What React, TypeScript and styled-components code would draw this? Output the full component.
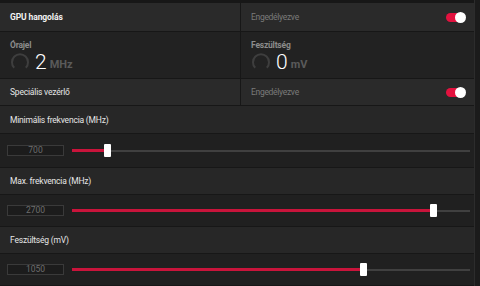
import React from 'react'
import styled, { createGlobalStyle } from 'styled-components'

const Global = createGlobalStyle`
  html, body { margin: 0; padding: 0; background: #151515; }
  body { font-family: Roboto, "Open Sans", sans-serif; }
`

const Page = styled.div`
  display: flex;
  width: 480px;
  height: 286px;
  overflow: hidden;
  background: #151515;
`

const Main = styled.div`
  flex: 1;
  display: flex;
  flex-direction: column;
  gap: 1px;
  padding-top: 3px;
  background: #171717;
  border-right: 1px solid #2c2c2c;
`

const Scroll = styled.div`
  width: 5px;
  background: #1b1b1b;
`

const Split = styled.div<{ h: number; bg: string }>`
  display: grid;
  grid-template-columns: 240px 1fr;
  gap: 1px;
  height: ${p => p.h}px;
  background: #171717;
  & > div { background: ${p => p.bg}; }
`

const Cell = styled.div`
  display: flex;
  align-items: center;
  justify-content: space-between;
  padding: 0 9px 0 10px;
`

const Title = styled.span`
  color: #f2f2f2;
  font-size: 8.5px;
  font-weight: 700;
  letter-spacing: -0.1px;
`

const Label = styled.span`
  color: #e6e6e6;
  font-size: 8.5px;
  letter-spacing: -0.2px;
`

const Muted = styled.span`
  color: #7a7a7a;
  font-size: 8.5px;
  letter-spacing: -0.3px;
`

const Toggle = styled.div`
  position: relative;
  width: 19px;
  height: 9px;
  border-radius: 5px;
  background: #e3123f;
  &::after {
    content: '';
    position: absolute;
    right: -1px;
    top: -1px;
    width: 11px;
    height: 11px;
    border-radius: 50%;
    background: #fff;
  }
`

const Stat = styled.div`
  display: flex;
  flex-direction: column;
  justify-content: center;
  padding: 0 10px;
  gap: 1px;
`

const StatName = styled.span`
  color: #8c8c8c;
  font-size: 8.5px;
  line-height: 12px;
  font-weight: 700;
  letter-spacing: -0.2px;
`

const StatLine = styled.div`
  display: flex;
  align-items: center;
  gap: 5px;
`

const Big = styled.span`
  color: #fff;
  font-size: 21px;
  font-weight: 300;
  line-height: 20px;
`

const Unit = styled.span`
  color: #5a5a5a;
  font-size: 11px;
  font-weight: 700;
  margin-left: -2px;
  margin-top: 5px;
`

const LabelRow = styled.div<{ h: number }>`
  display: flex;
  align-items: center;
  height: ${p => p.h}px;
  padding: 0 10px;
  background: #272727;
`

const SliderRow = styled.div<{ h: number }>`
  display: flex;
  align-items: center;
  height: ${p => p.h}px;
  padding: 0 4px 0 7px;
  background: #202020;
  gap: 8px;
`

const ValueBox = styled.div`
  width: 57px;
  height: 11px;
  box-sizing: border-box;
  border: 1px solid #3a3a3a;
  background: #1c1c1c;
  color: #6e6e6e;
  font-size: 8.5px;
  line-height: 9px;
  text-align: center;
`

const Track = styled.div`
  position: relative;
  flex: 1;
  height: 2px;
  background: #404040;
`

const Fill = styled.div`
  position: absolute;
  left: 0;
  top: -0.5px;
  height: 3px;
  background: #c9143b;
`

const Thumb = styled.div`
  position: absolute;
  top: -6px;
  width: 7px;
  height: 13px;
  margin-left: -3px;
  background: #fff;
  border-radius: 1px;
`

const Gauge = () => (
  <svg width="20" height="20" viewBox="0 0 20 20">
    <path d="M4.2 15.8 A8 8 0 1 1 15.8 15.8" fill="none" stroke="#3e3e3e" strokeWidth="2" />
  </svg>
)

const Slider = ({ value, pct, h }: { value: string; pct: number; h: number }) => (
  <SliderRow h={h}>
    <ValueBox>{value}</ValueBox>
    <Track>
      <Fill style={{ width: `${pct}%` }} />
      <Thumb style={{ left: `${pct}%` }} />
    </Track>
  </SliderRow>
)

export default function App() {
  return (
    <Page>
      <Global />
      <Main>
        <Split h={28} bg="#2a2a2a">
          <Cell><Title>GPU hangolás</Title></Cell>
          <Cell><Muted>Engedélyezve</Muted><Toggle /></Cell>
        </Split>
        <Split h={46} bg="#222222">
          <Stat>
            <StatName>Órajel</StatName>
            <StatLine><Gauge /><Big>2</Big><Unit>MHz</Unit></StatLine>
          </Stat>
          <Stat>
            <StatName>Feszültség</StatName>
            <StatLine><Gauge /><Big>0</Big><Unit>mV</Unit></StatLine>
          </Stat>
        </Split>
        <Split h={26} bg="#2a2a2a">
          <Cell><Label>Speciális vezérlő</Label></Cell>
          <Cell><Muted>Engedélyezve</Muted><Toggle /></Cell>
        </Split>
        <LabelRow h={27}><Label>Minimális frekvencia (MHz)</Label></LabelRow>
        <Slider value="700" pct={8.8} h={33} />
        <LabelRow h={26}><Label>Max. frekvencia (MHz)</Label></LabelRow>
        <Slider value="2700" pct={90.7} h={31} />
        <LabelRow h={26}><Label>Feszültség (mV)</Label></LabelRow>
        <Slider value="1050" pct={73} h={31} />
      </Main>
      <Scroll />
    </Page>
  )
}
